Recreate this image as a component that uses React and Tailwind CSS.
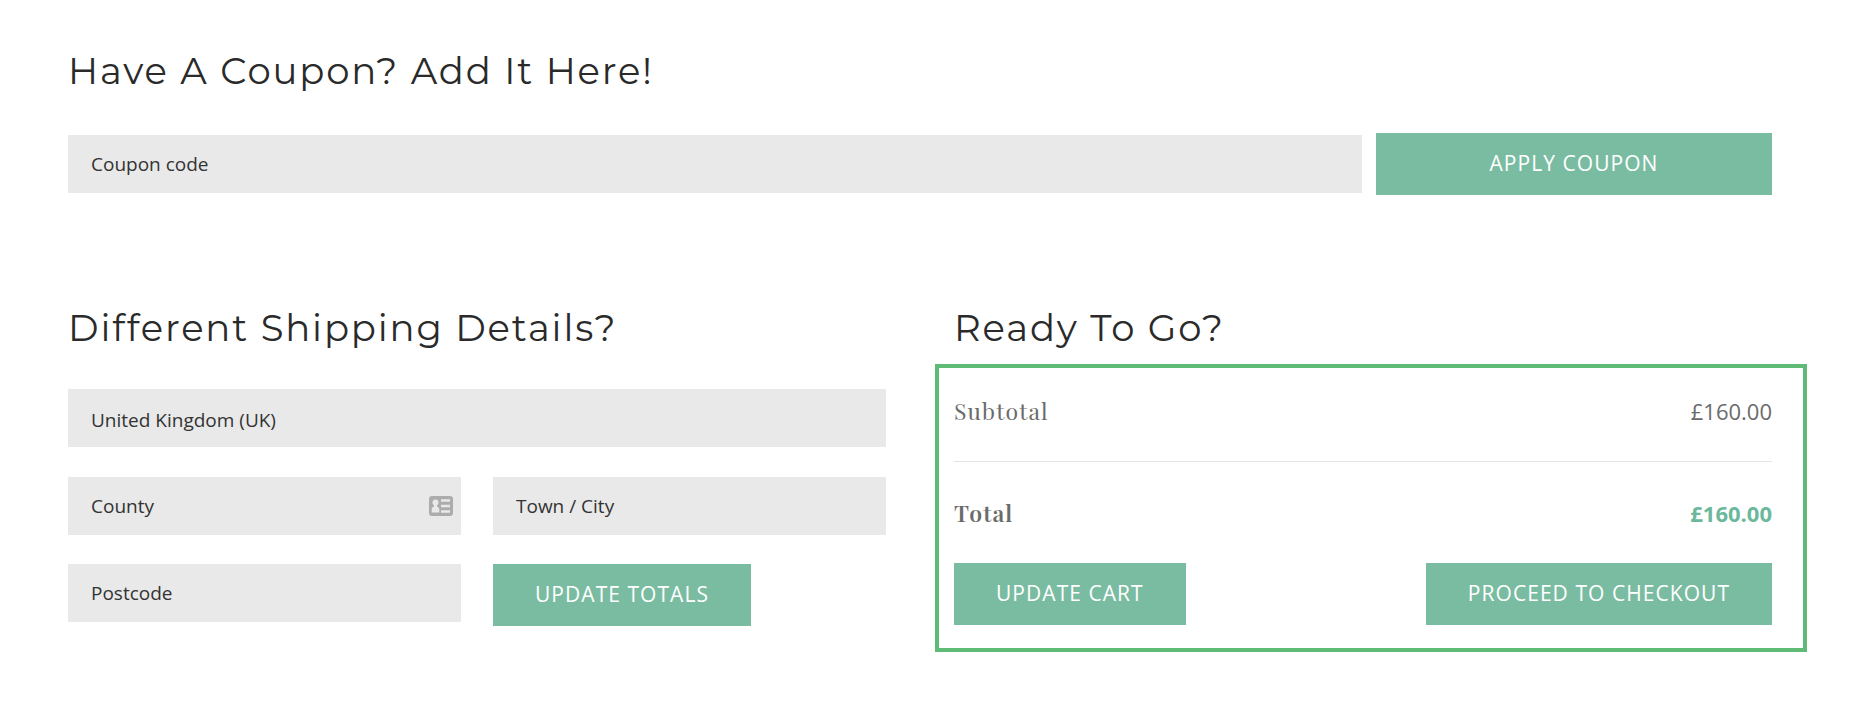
import React, { useState } from 'react';

const headingClass = "font-['Montserrat',sans-serif] text-[37px] leading-12 font-normal tracking-wider text-[#2a2a2a]";
const fieldClass = "block w-full h-[58px] px-[23px] appearance-none rounded-none border-0 bg-[#e9e9e9] text-[19px] text-[#333333] placeholder:text-[#333333] placeholder:opacity-100 focus:outline-none focus:ring-2 focus:ring-[#7abca2]";
const buttonClass = "h-[62px] px-[42px] bg-[#7abca2] text-[21px] tracking-wider text-white uppercase whitespace-nowrap cursor-pointer hover:bg-[#68ab91]";
const rowLabelClass = "text-left font-['Playfair_Display','Liberation_Serif',serif] text-[23px] leading-8 tracking-wider";

function ContactCardIcon() {
    return (
        <svg viewBox="0 0 24 20" className="absolute right-2 top-[19px] w-6 h-5 pointer-events-none" aria-hidden="true">
            <rect width="24" height="20" rx="3" fill="#acacac" />
            <circle cx="6.5" cy="6.6" r="3" fill="#e9e9e9" />
            <path d="M5 8h3v2.6c1.600.5 2.300 1.500 2.300 3V16.500H2.700V13.600c0-1.500.8-2.500 2.300-3z" fill="#e9e9e9" />
            <path d="M12 4.500h9M12 10h9M12 15.500h9" stroke="#e9e9e9" strokeWidth="2.400" />
        </svg>
    );
}

function Field({ name, label, value, onChange, children }) {
    return (
        <div className="relative">
            <input name={name} type="text" aria-label={label} placeholder={label} value={value} onChange={onChange} className={fieldClass} />
            {children}
        </div>
    );
}

export default function CartTotals() {
    const [data, setData] = useState({ coupon: '', county: '', city: '', postcode: '' });

    const handleChange = (e) => setData({ ...data, [e.target.name]: e.target.value });
    const handleSubmit = (e) => e.preventDefault();

    return (
        <main className="min-h-screen bg-white pt-[47px] pb-12 pl-[68px] pr-[78px] font-['Open_Sans',sans-serif]">
            <form onSubmit={handleSubmit}>
                <h2 className={headingClass}>Have A Coupon? Add It Here!</h2>
                <div className="mt-[38px] flex items-center gap-[14px]">
                    <div className="flex-1">
                        <Field name="coupon" label="Coupon code" value={data.coupon} onChange={handleChange} />
                    </div>
                    <button type="submit" className={`${buttonClass} w-99`}>Apply coupon</button>
                </div>
            </form>

            <div className="mt-[109px] grid grid-cols-2 gap-[68px]">
                <form onSubmit={handleSubmit}>
                    <h2 className={headingClass}>Different Shipping Details?</h2>
                    <select name="country" aria-label="Country" className={`${fieldClass} mt-[37px] pt-1`}>
                        <option>United Kingdom (UK)</option>
                    </select>
                    <div className="mt-[30px] grid grid-cols-2 items-start gap-x-8 gap-y-[29px]">
                        <Field name="county" label="County" value={data.county} onChange={handleChange}>
                            <ContactCardIcon />
                        </Field>
                        <Field name="city" label="Town / City" value={data.city} onChange={handleChange} />
                        <Field name="postcode" label="Postcode" value={data.postcode} onChange={handleChange} />
                        <button type="submit" className={`${buttonClass} justify-self-start`}>Update totals</button>
                    </div>
                </form>

                <section>
                    <h2 className={headingClass}>Ready To Go?</h2>
                    <div className="mt-3 -ml-[19px] -mr-[35px] border-4 border-[#5dbb76] pl-[15px] pr-[31px] pb-[23px]">
                        <table className="w-full text-[22px] leading-8 text-[#6b6b6b]">
                            <tbody>
                                <tr className="border-b border-[#e4e4e4]">
                                    <th scope="row" className={`${rowLabelClass} pt-[27px] pb-[34px] font-normal`}>Subtotal</th>
                                    <td className="pt-[27px] pb-[34px] text-right">£160.00</td>
                                </tr>
                                <tr>
                                    <th scope="row" className={`${rowLabelClass} pt-[35px] pb-[34px] font-semibold`}>Total</th>
                                    <td className="pt-[35px] pb-[34px] text-right font-bold text-[#6bb89c]">£160.00</td>
                                </tr>
                            </tbody>
                        </table>
                        <div className="flex justify-between">
                            <button type="button" className={buttonClass}>Update cart</button>
                            <button type="button" className={buttonClass}>Proceed to checkout</button>
                        </div>
                    </div>
                </section>
            </div>
        </main>
    );
}
